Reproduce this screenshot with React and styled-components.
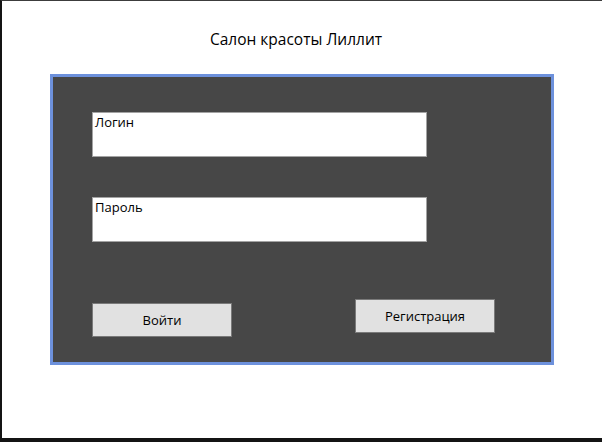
import React from "react";
import styled, { createGlobalStyle } from "styled-components";

const Global = createGlobalStyle`
  html, body { margin: 0; padding: 0; background: #ffffff; }
  * { box-sizing: border-box; }
`;

const Window = styled.div`
  width: 602px;
  height: 442px;
  background: #ffffff;
  border-top: 1px solid #3c3c3c;
  border-left: 2px solid #141414;
  border-bottom: 4px solid #141414;
  font-family: "Open Sans", "Noto Sans", sans-serif;
  color: #000;
  overflow: hidden;
`;

const Title = styled.h1`
  margin: 27px 0 0 0;
  height: 46px;
  line-height: 22px;
  font-size: 15.5px;
  font-weight: 400;
  text-align: center;
  padding-right: 12px;
`;

const Panel = styled.div`
  margin-left: 48px;
  width: 504px;
  height: 291px;
  background: #474747;
  border: 3px solid #6d91dc;
  padding: 35px 0 0 39px;
  display: flex;
  flex-direction: column;
`;

const Field = styled.div`
  width: 335px;
  height: 45px;
  background: #ffffff;
  border: 1px solid #a3a3a3;
  padding: 1px 2px;
  font-size: 13px;
  line-height: 16px;
  color: #000;
  margin-bottom: ${(p) => p.$gap}px;
`;

const ButtonRow = styled.div`
  display: flex;
  align-items: flex-start;
  gap: 123px;
`;

const Button = styled.button`
  width: 140px;
  height: 34px;
  margin-top: ${(p) => p.$offset}px;
  background: #e1e1e1;
  border: 1px solid #7a7a7a;
  font-family: "Open Sans", "Noto Sans", sans-serif;
  font-size: 13px;
  color: #000;
  padding: 0;
  display: flex;
  align-items: center;
  justify-content: center;
`;

export default function App() {
  return (
    <>
      <Global />
      <Window>
        <Title>Салон красоты Лиллит</Title>
        <Panel>
          <Field $gap={40}>Логин</Field>
          <Field $gap={57}>Пароль</Field>
          <ButtonRow>
            <Button $offset={4}>Войти</Button>
            <Button $offset={0}>Регистрация</Button>
          </ButtonRow>
        </Panel>
      </Window>
    </>
  );
}
